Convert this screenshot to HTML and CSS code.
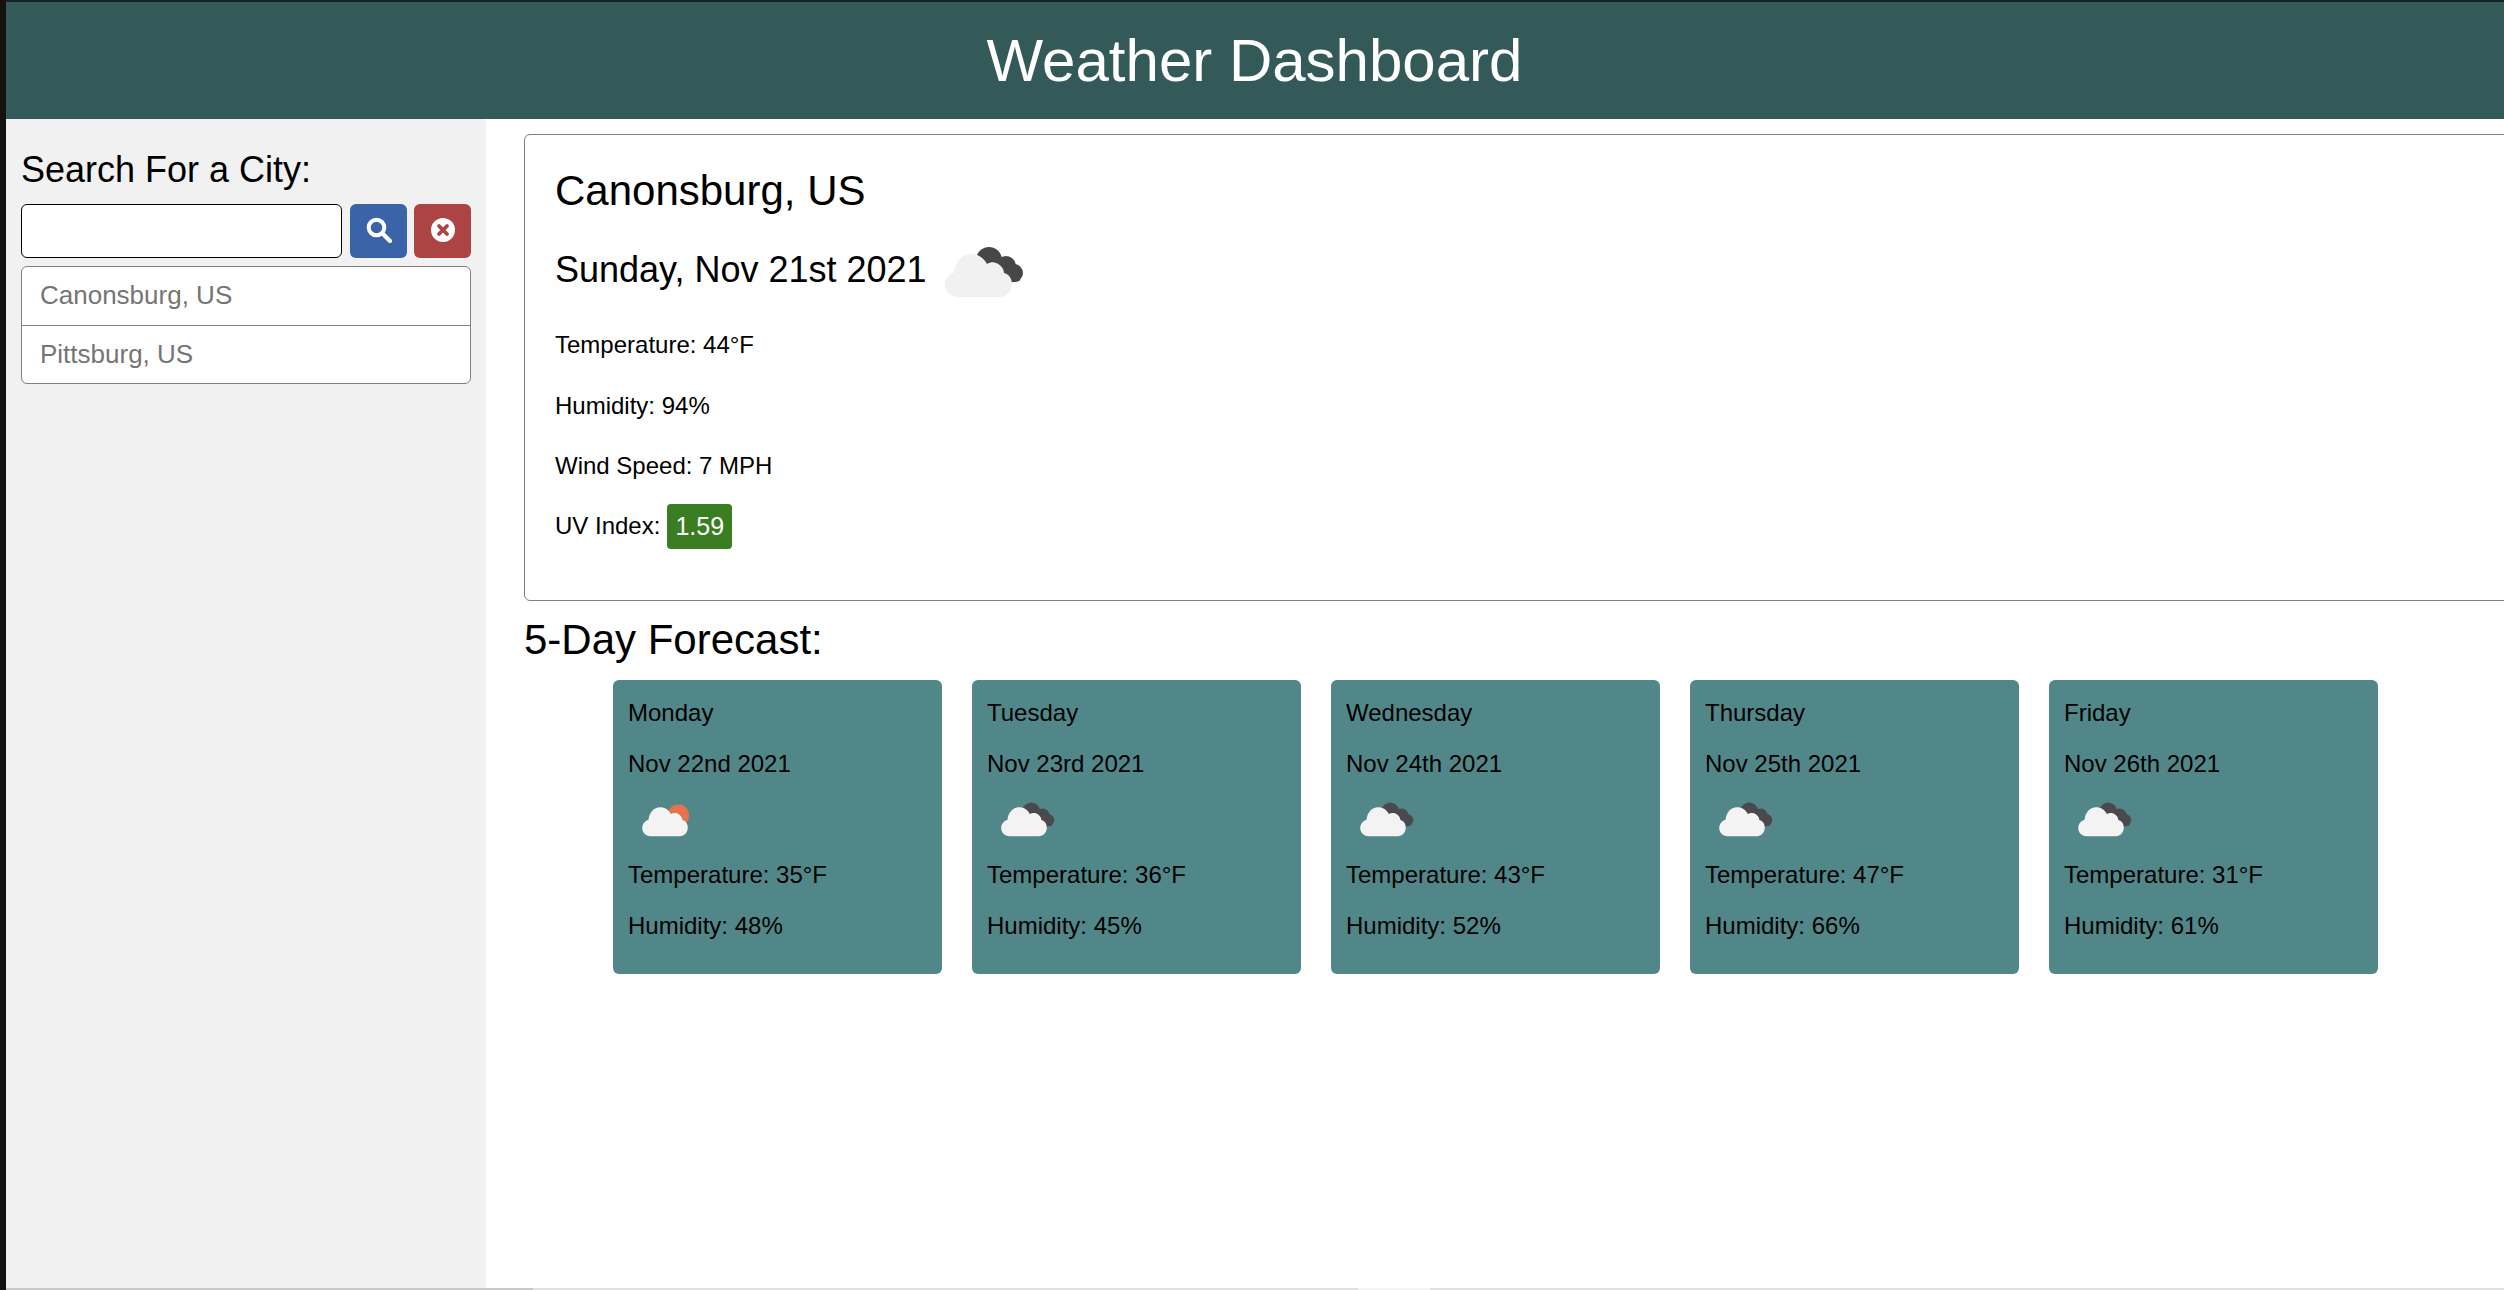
FILE: index.html
```html
<!DOCTYPE html>
<html lang="en">
<head>
<meta charset="utf-8">
<title>Weather Dashboard</title>
<link rel="stylesheet" href="styles.css">
</head>
<body>
<svg class="defs" width="0" height="0" aria-hidden="true">
  <defs>
    <symbol id="cloud-shape" viewBox="0 0 90 70">
      <path d="M17 68a12.500 12.500 0 0 1-3-24.600C15 33 22 25 31 25c7 0 13 4 16 10 3-2 7-2 9-1 5 2 8 6 8 10 5 1 8 6 8 11 0 7-5 13-12 13z"/>
    </symbol>
    <symbol id="dark-shape" viewBox="0 0 90 70">
      <circle cx="49" cy="31" r="13"/>
      <circle cx="66" cy="37" r="10"/>
      <circle cx="74" cy="44" r="9"/>
      <path d="M42 22 60 30 80 52 68 54 44 36z"/>
    </symbol>
  </defs>
</svg>
<div class="frame">
  <header class="top"><h1 class="brand">Weather Dashboard</h1></header>
  <div class="body-row">
    <aside class="side">
      <h2 class="side-title">Search For a City:</h2>
      <div class="search-row">
        <input class="city-input" type="text" aria-label="City">
        <button class="btn btn-blue" type="button" aria-label="Search">
          <svg class="btn-icon" viewBox="0 0 26 26"><circle cx="10.500" cy="10.500" r="7.800" fill="none" stroke="#fff" stroke-width="4"/><path d="M16.500 16.500 24 24" stroke="#fff" stroke-width="4.200" stroke-linecap="round"/></svg>
        </button>
        <button class="btn btn-red" type="button" aria-label="Clear">
          <svg class="btn-icon" viewBox="0 0 26 26"><circle cx="13" cy="13" r="12"/><path d="M9 9l8 8M17 9l-8 8" stroke="#ac4444" stroke-width="3.800" stroke-linecap="round"/></svg>
        </button>
      </div>
      <ul class="history">
        <li class="history-item">Canonsburg, US</li>
        <li class="history-item">Pittsburg, US</li>
      </ul>
    </aside>
    <main class="content">
      <section class="today">
        <h2 class="today-city">Canonsburg, US</h2>
        <div class="today-date-row">
          <h3 class="today-date">Sunday, Nov 21st 2021</h3>
          <svg class="today-icon" viewBox="0 0 90 70"><use href="#dark-shape" fill="#474747"/><use href="#cloud-shape" fill="#f1f1f1"/></svg>
        </div>
        <p class="today-line">Temperature: 44°F</p>
        <p class="today-line">Humidity: 94%</p>
        <p class="today-line">Wind Speed: 7 MPH</p>
        <p class="today-line">UV Index: <span class="uv">1.59</span></p>
      </section>
      <h2 class="forecast-title">5-Day Forecast:</h2>
      <div class="forecast">
        <article class="day">
          <p class="day-line">Monday</p>
          <p class="day-line">Nov 22nd 2021</p>
          <svg class="day-icon" viewBox="0 0 90 70"><circle cx="58" cy="37" r="16" fill="#e5734e"/><use href="#cloud-shape" fill="#f3f3f3"/></svg>
          <p class="day-line">Temperature: 35°F</p>
          <p class="day-line">Humidity: 48%</p>
        </article>
        <article class="day">
          <p class="day-line">Tuesday</p>
          <p class="day-line">Nov 23rd 2021</p>
          <svg class="day-icon" viewBox="0 0 90 70"><use href="#dark-shape" fill="#4a4a4e"/><use href="#cloud-shape" fill="#f3f3f3"/></svg>
          <p class="day-line">Temperature: 36°F</p>
          <p class="day-line">Humidity: 45%</p>
        </article>
        <article class="day">
          <p class="day-line">Wednesday</p>
          <p class="day-line">Nov 24th 2021</p>
          <svg class="day-icon" viewBox="0 0 90 70"><use href="#dark-shape" fill="#4a4a4e"/><use href="#cloud-shape" fill="#f3f3f3"/></svg>
          <p class="day-line">Temperature: 43°F</p>
          <p class="day-line">Humidity: 52%</p>
        </article>
        <article class="day">
          <p class="day-line">Thursday</p>
          <p class="day-line">Nov 25th 2021</p>
          <svg class="day-icon" viewBox="0 0 90 70"><use href="#dark-shape" fill="#4a4a4e"/><use href="#cloud-shape" fill="#f3f3f3"/></svg>
          <p class="day-line">Temperature: 47°F</p>
          <p class="day-line">Humidity: 66%</p>
        </article>
        <article class="day">
          <p class="day-line">Friday</p>
          <p class="day-line">Nov 26th 2021</p>
          <svg class="day-icon" viewBox="0 0 90 70"><use href="#dark-shape" fill="#4a4a4e"/><use href="#cloud-shape" fill="#f3f3f3"/></svg>
          <p class="day-line">Temperature: 31°F</p>
          <p class="day-line">Humidity: 61%</p>
        </article>
      </div>
    </main>
  </div>
  <div class="scrollbar">
    <span class="sb-thumb"></span>
    <span class="sb-track"></span>
    <span class="sb-mark"></span>
    <span class="sb-rest"></span>
  </div>
</div>
</body>
</html>
```

FILE: styles.css
```css
* { box-sizing: border-box; }
html, body { margin: 0; height: 100%; overflow: hidden; }
body {
  font-family: "Liberation Sans", Arial, sans-serif;
  color: #000;
  background: #fff;
}
.defs { display: block; height: 0; }
.frame {
  height: 1290px;
  display: flex;
  flex-direction: column;
  border-left: 6px solid #14110e;
  overflow: hidden;
}
.top {
  flex: none;
  height: 119px;
  border-top: 2px solid #14211f;
  background: #335a58;
  display: flex;
  align-items: center;
  justify-content: center;
}
.brand {
  margin: 0 0 0 -1px;
  font-size: 60px;
  font-weight: 400;
  color: #fff;
}
.body-row {
  flex: 1;
  min-height: 0;
  display: flex;
}
.side {
  flex: none;
  width: 480px;
  padding: 32px 15px 0 15px;
  background: #f1f1f1;
}
.side-title {
  margin: 0 0 16px;
  font-size: 36px;
  line-height: 37px;
  font-weight: 400;
}
.search-row {
  display: flex;
  gap: 7px;
  height: 54px;
}
.city-input {
  flex: none;
  width: 321px;
  margin-right: 1px;
  height: 54px;
  border: 1.500px solid #000;
  border-radius: 6px;
  background: #fff;
}
.btn {
  flex: none;
  width: 57px;
  height: 54px;
  border: 0;
  border-radius: 6px;
  padding: 0;
  display: flex;
  align-items: center;
  justify-content: center;
}
.btn-blue { background: #3b63a8; }
.btn-red { background: #ac4444; }
.btn-icon { width: 26px; height: 26px; fill: #fff; margin-bottom: 3px; }
.history {
  list-style: none;
  margin: 8px 0 0;
  padding: 0;
  width: 450px;
  border: 1px solid #808080;
  border-radius: 6px;
  background: #fff;
}
.history-item {
  height: 58px;
  padding: 0 0 2px 18px;
  display: flex;
  align-items: center;
  font-size: 26px;
  color: #757575;
}
.history-item + .history-item { border-top: 1px solid #808080; padding-bottom: 1px; }
.content {
  flex: 1;
  min-width: 0;
  overflow: hidden;
  padding: 15px 0 0 38px;
}
.today {
  width: 2200px;
  height: 467px;
  border: 1px solid #808080;
  border-radius: 6px;
  padding: 31px 30px 0;
}
.today-city {
  margin: 0 0 19px;
  font-size: 42px;
  line-height: 49px;
  font-weight: 400;
}
.today-date-row {
  display: flex;
  align-items: center;
  height: 70px;
  margin-bottom: 23px;
}
.today-date {
  margin: 2px 0 0;
  font-size: 36px;
  font-weight: 400;
}
.today-icon {
  width: 90px;
  height: 70px;
  margin: -10px 0 0 13px;
}
.today-line {
  margin: 0 0 24px;
  height: 36px;
  display: flex;
  align-items: center;
  gap: 7px;
  font-size: 24px;
}
.today-line:nth-of-type(1) { margin-bottom: 25px; }
.uv {
  height: 45px;
  padding: 0 8px;
  display: flex;
  align-items: center;
  border-radius: 4px;
  background: #3a7d22;
  color: #fff;
  font-size: 25px;
}
.forecast-title {
  margin: 16px 0 17px;
  font-size: 42px;
  line-height: 46px;
  font-weight: 400;
}
.forecast {
  display: flex;
  gap: 30px;
  padding-left: 89px;
}
.day {
  flex: none;
  width: 329px;
  height: 294px;
  padding: 15px 15px 0;
  border-radius: 6px;
  background: #518789;
}
.day-line {
  margin: 0 0 16px;
  font-size: 24px;
  line-height: 35px;
}
.day-icon {
  display: block;
  width: 61px;
  height: 48px;
  margin: -7px 0 19px 11px;
}
.scrollbar {
  flex: none;
  height: 2px;
  display: flex;
  background: #e0e0e0;
}
.sb-thumb { width: 527px; background: #c8c8c8; }
.sb-track { width: 825px; background: #e0e0e0; }
.sb-mark { width: 72px; background: #f4f4f4; }
.sb-rest { flex: 1; background: #e0e0e0; }
```
